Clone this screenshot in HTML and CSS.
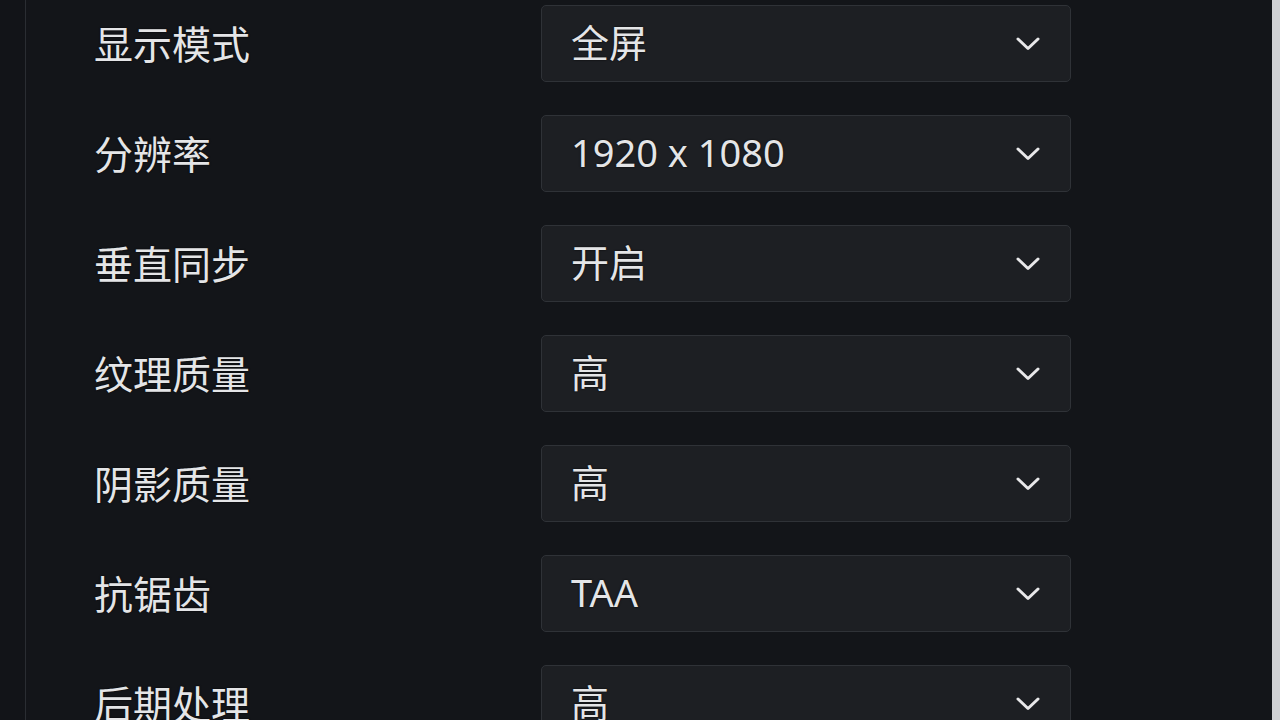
FILE: index.html
```html
<!DOCTYPE html>
<html lang="zh-CN">

<head>
    <meta charset="UTF-8">
    <meta name="viewport" content="width=device-width, initial-scale=1.0">
    <title>画面设置</title>
    <link rel="stylesheet" href="styles.css">
</head>

<body>
    <div class="window">
        <div class="panel">
            <div class="settings">
                <div class="setting-row">
                    <span class="setting-label">显示模式</span>
                    <div class="select">
                        <span class="select-value">全屏</span>
                        <svg class="chevron" viewBox="0 0 24 14"><polyline points="2,2 12,11.5 22,2"/></svg>
                    </div>
                </div>
                <div class="setting-row">
                    <span class="setting-label">分辨率</span>
                    <div class="select">
                        <span class="select-value">1920 x 1080</span>
                        <svg class="chevron" viewBox="0 0 24 14"><polyline points="2,2 12,11.5 22,2"/></svg>
                    </div>
                </div>
                <div class="setting-row">
                    <span class="setting-label">垂直同步</span>
                    <div class="select">
                        <span class="select-value">开启</span>
                        <svg class="chevron" viewBox="0 0 24 14"><polyline points="2,2 12,11.5 22,2"/></svg>
                    </div>
                </div>
                <div class="setting-row">
                    <span class="setting-label">纹理质量</span>
                    <div class="select">
                        <span class="select-value">高</span>
                        <svg class="chevron" viewBox="0 0 24 14"><polyline points="2,2 12,11.5 22,2"/></svg>
                    </div>
                </div>
                <div class="setting-row">
                    <span class="setting-label">阴影质量</span>
                    <div class="select">
                        <span class="select-value">高</span>
                        <svg class="chevron" viewBox="0 0 24 14"><polyline points="2,2 12,11.5 22,2"/></svg>
                    </div>
                </div>
                <div class="setting-row">
                    <span class="setting-label">抗锯齿</span>
                    <div class="select">
                        <span class="select-value">TAA</span>
                        <svg class="chevron" viewBox="0 0 24 14"><polyline points="2,2 12,11.5 22,2"/></svg>
                    </div>
                </div>
                <div class="setting-row">
                    <span class="setting-label">后期处理</span>
                    <div class="select">
                        <span class="select-value">高</span>
                        <svg class="chevron" viewBox="0 0 24 14"><polyline points="2,2 12,11.5 22,2"/></svg>
                    </div>
                </div>
            </div>
        </div>
    </div>
</body>

</html>
```

FILE: styles.css
```css
html,
body {
    margin: 0;
    height: 100%;
    overflow: hidden;
}

body {
    background-color: #cfd0d3;
    font-family: "Noto Sans", "Noto Sans CJK SC", sans-serif;
}

.window {
    margin-right: 8px;
    height: 100%;
    background-color: #121418;
}

.panel {
    margin-left: 25px;
    height: 100%;
    border-left: 1px solid #2a2d32;
    background-color: #131519;
}

.settings {
    padding: 5px 0 0 68px;
    display: flex;
    flex-direction: column;
    gap: 33px;
}

.setting-row {
    display: grid;
    grid-template-columns: 447px 530px;
    align-items: center;
}

.setting-label,
.select-value {
    line-height: 1;
    color: #e4e5e7;
    text-shadow: 0 0 2px rgba(0, 0, 0, 0.9);
}

.setting-label {
    font-size: 39px;
}

.select-value {
    padding-bottom: 4px;
    font-size: 38px;
}

/* fake select box, value on the left and chevron on the right */
.select {
    width: 469px;
    height: 75px;
    padding: 0 30px 0 29px;
    display: flex;
    align-items: center;
    justify-content: space-between;
    background-color: #1d1f23;
    border: 1px solid #2f3237;
    border-radius: 5px;
}

.chevron {
    width: 24px;
    height: 14px;
    fill: none;
    stroke: #e8e8ea;
    stroke-width: 3;
    stroke-linecap: round;
    stroke-linejoin: round;
}
```
